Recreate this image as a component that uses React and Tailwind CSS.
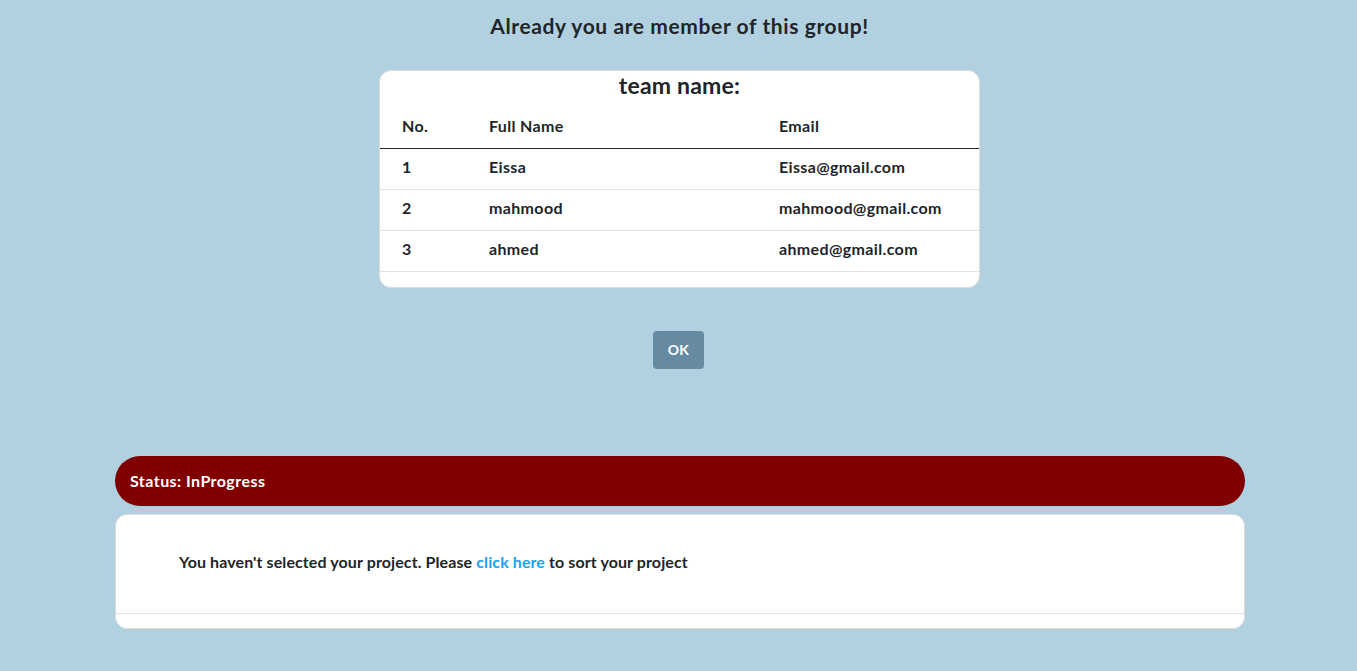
export default function App() {
  const rows = [
    ["1", "Eissa", "Eissa@gmail.com"],
    ["2", "mahmood", "mahmood@gmail.com"],
    ["3", "ahmed", "ahmed@gmail.com"],
  ];
  return (
    <div className="min-h-[671px] w-full bg-[#b1d0e0] text-[#212529] font-['Lato','Open_Sans',sans-serif] pt-[13px]">
      <h2 className="text-center text-[21px] font-bold tracking-[0.6px] leading-[26px] pl-[2px]">
        Already you are member of this group!
      </h2>
      <div className="flex justify-center mt-[31px] pl-[2px]">
        <div className="w-[601px] bg-white rounded-[12px] border border-[#dcdcdc] overflow-hidden pb-[15px]">
          <div className="text-center text-[23px] font-bold tracking-[0.2px] leading-[28px]">team name:</div>
          <table className="w-full text-[16px] font-bold tracking-[0.35px]">
            <thead>
              <tr className="border-b border-[#212529]">
                <th className="text-left font-bold pl-[22px] w-[109px] h-[49px] pt-[6px]">No.</th>
                <th className="text-left font-bold w-[290px] pt-[6px]">Full Name</th>
                <th className="text-left font-bold pt-[6px]">Email</th>
              </tr>
            </thead>
            <tbody>
              {rows.map((r) => (
                <tr key={r[0]} className="border-b border-[#dee2e6] h-[41px]">
                  <td className="pl-[22px] pb-[3px]">{r[0]}</td>
                  <td className="pb-[3px]">{r[1]}</td>
                  <td className="pb-[3px]">{r[2]}</td>
                </tr>
              ))}
            </tbody>
          </table>
        </div>
      </div>
      <div className="flex justify-center mt-[43px]">
        <button className="w-[51px] h-[38px] rounded-[4px] bg-[#668aa2] text-white text-[14px] font-bold tracking-[0.3px]">
          OK
        </button>
      </div>
      <div className="w-[1130px] ml-[115px] mt-[87px]">
        <div className="h-[50px] rounded-full bg-[#800000] text-white font-bold text-[16px] tracking-[0.45px] flex items-center pl-[15px]">
          Status: InProgress
        </div>
        <div className="mt-[8px] bg-white rounded-[12px] border border-[#dcdcdc] overflow-hidden">
          <div className="h-[99px] border-b border-[#dee2e6] flex items-center pl-[63px] text-[16px] tracking-[0.1px] font-bold pb-[4px]">
            <span>
              You haven't selected your project. Please{" "}
              <a className="text-[#1aa3f0]" href="#">click here</a> to sort your project
            </span>
          </div>
          <div className="h-[14px]"></div>
        </div>
      </div>
    </div>
  );
}
